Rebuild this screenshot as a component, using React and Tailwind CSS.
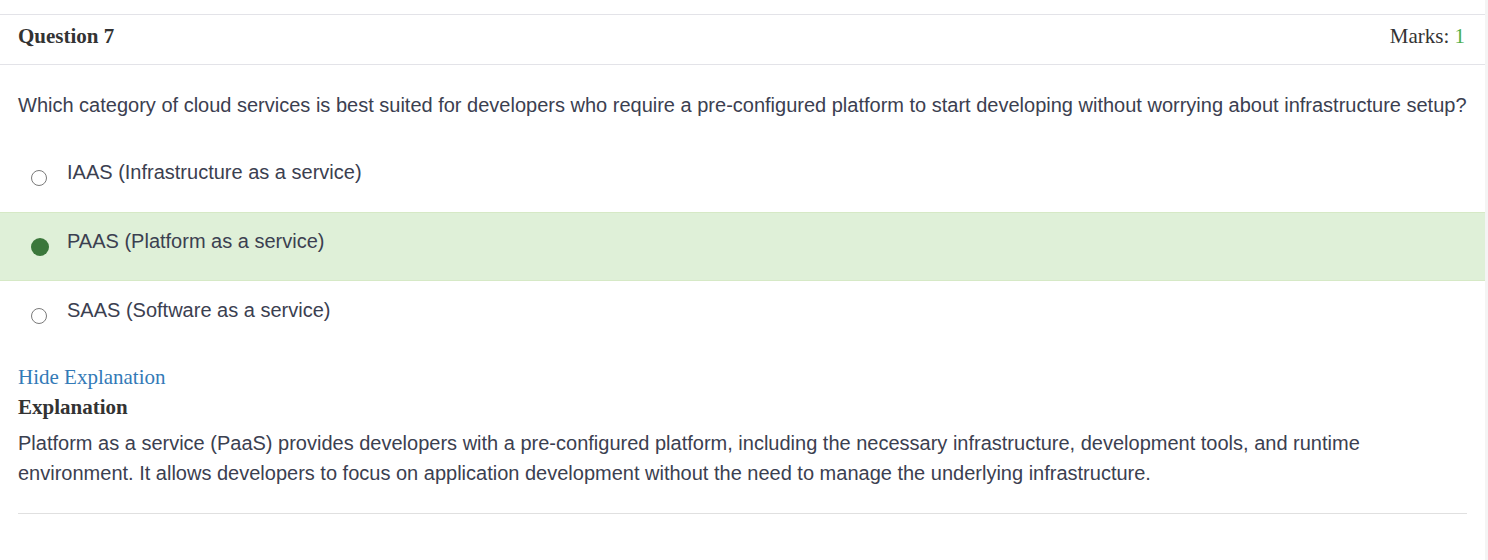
import React from "react";

const options = [
  { id: "a", label: "IAAS (Infrastructure as a service)", selected: false },
  { id: "b", label: "PAAS (Platform as a service)", selected: true },
  { id: "c", label: "SAAS (Software as a service)", selected: false },
];

const serif = { fontFamily: '"Liberation Serif", "Times New Roman", serif' };

const OptionRow = ({ label, selected }) => (
  <div
    className={`flex h-[69px] items-center ${
      selected ? "border-y border-[#d6e9c6] bg-[#dff0d8]" : ""
    }`}
  >
    <div className="flex w-[67px] justify-center pl-[10px]">
      {selected ? (
        <span className="ml-[2px] block h-[18px] w-[18px] rounded-full bg-[#3b773b]"></span>
      ) : (
        <span className="block h-[16px] w-[16px] rounded-full border-[1.5px] border-[#7a7a7a]"></span>
      )}
    </div>
    <span className="mb-[11px] text-[20px] text-[#3b4050]">{label}</span>
  </div>
);

export default function App() {
  return (
    <div className="flex h-[560px] w-[1488px] bg-white font-['Liberation_Sans',Arial,sans-serif]">
      <div className="w-[1485px] pt-[14px]">
        {/* header */}
        <div className="flex h-[51px] justify-between border-y border-[#e3e3e8] px-[18px] pt-[8px]" style={serif}>
          <span className="text-[21px] font-bold leading-[26px] text-[#333]">Question 7</span>
          <span className="mr-[2px] text-[21px] leading-[26px] text-[#333]">
            Marks: <span className="text-[#4cae4c]">1</span>
          </span>
        </div>

        <div className="px-[18px] pt-[26px]">
          <p className="text-[20px] leading-[28px] text-[#3b4050]">
            Which category of cloud services is best suited for developers who require a pre-configured platform to start developing without worrying about infrastructure setup?
          </p>
        </div>

        <div className="mt-[24px]">
          {options.map((o) => (
            <OptionRow key={o.id} label={o.label} selected={o.selected} />
          ))}
        </div>

        <div className="px-[18px] pt-[12px]">
          <a className="block text-[21px] leading-[30px] text-[#337ab7]" style={serif}>
            Hide Explanation
          </a>
          <div className="text-[21px] font-bold leading-[30px] text-[#333]" style={serif}>
            Explanation
          </div>
          <p className="mt-[6px] text-[20px] leading-[30px] text-[#3b4050]">
            Platform as a service (PaaS) provides developers with a pre-configured platform, including the necessary infrastructure, development tools, and runtime environment. It allows developers to focus on application development without the need to manage the underlying infrastructure.
          </p>
          <div className="mt-[25px] w-[1449px] border-t border-[#e0e0e0]"></div>
        </div>
      </div>
      <div className="w-[3px] bg-[#f4f4f4]"></div>
    </div>
  );
}
